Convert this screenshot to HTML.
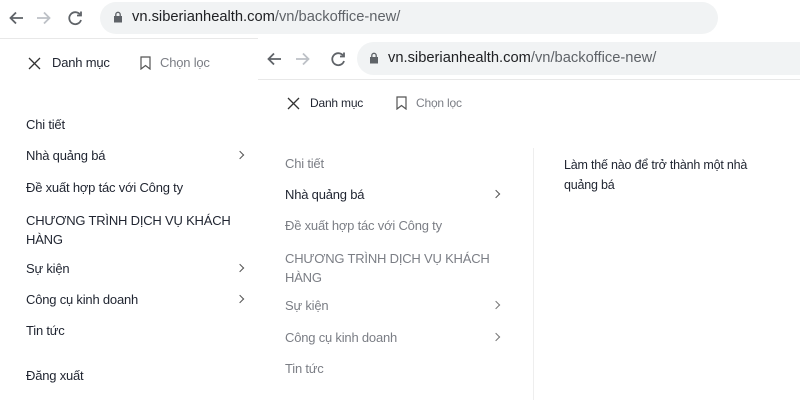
<!DOCTYPE html>
<html><head><meta charset="utf-8"><style>
*{margin:0;padding:0;box-sizing:border-box}
body{width:800px;height:400px;overflow:hidden;background:#fff;font-family:"Liberation Sans",Arial,sans-serif;position:relative;color:#1f2430}
.a{position:absolute;white-space:nowrap}
.pill{position:absolute;background:#f1f3f4;border-radius:17px}
.url{font-size:14.7px;color:#202124}
.url span{color:#5f6368}
.m{font-size:13px;color:#1f2430;letter-spacing:-0.2px}
.g{color:#7b7e85}
.chev{position:absolute;width:6px;height:6px;border-right:1.3px solid #555;border-top:1.3px solid #555;transform:rotate(45deg)}
</style></head><body>
<svg class="a" style="left:8px;top:9px" width="80" height="18" viewBox="0 0 80 18" fill="none" stroke-width="1.8">
<path d="M15 9H3M8 3.5L2.5 9 8 14.5" stroke="#5f6368"/>
<path d="M29 9h12M36 3.5L41.5 9 36 14.5" stroke="#bdc1c6"/>
<path d="M72 5.5A6 6 0 1 0 73 11" stroke="#5f6368"/><path d="M73 2.5v4h-4" stroke="#5f6368"/>
</svg>
<div class="pill" style="left:100px;top:2px;width:618px;height:32px"></div>
<svg class="a" style="left:113px;top:11px" width="10" height="12" viewBox="0 0 10 12"><rect x="1" y="5" width="8" height="6.5" fill="#5f6368"/><path d="M2.8 5V3.5a2.2 2.2 0 0 1 4.4 0V5" stroke="#5f6368" stroke-width="1.3" fill="none"/></svg>
<div class="a url" style="left:132px;top:9px">vn.siberianhealth.com<span>/vn/backoffice-new/</span></div>
<div class="a" style="left:0;top:38px;width:800px;height:1px;background:#e8e8e8"></div>
<svg class="a" style="left:28px;top:57px" width="13" height="13" viewBox="0 0 13 13"><path d="M1 1l11 11M12 1L1 12" stroke="#333" stroke-width="1.3"/></svg>
<div class="a m" style="left:52px;top:55px">Danh mục</div>
<svg class="a" style="left:140px;top:56px" width="11" height="14" viewBox="0 0 11 14"><path d="M1 1h9v12L5.5 9.5 1 13z" stroke="#555" stroke-width="1.2" fill="none"/></svg>
<div class="a m g" style="left:160px;top:55px">Chọn lọc</div>
<div class="a m" style="left:26px;top:117px">Chi tiết</div>
<div class="a m" style="left:26px;top:148px">Nhà quảng bá</div><div class="chev" style="left:237px;top:152px"></div>
<div class="a m" style="left:26px;top:180px">Đề xuất hợp tác với Công ty</div>
<div class="a m" style="left:26px;top:211px;line-height:19px">CHƯƠNG TRÌNH DỊCH VỤ KHÁCH<br>HÀNG</div>
<div class="a m" style="left:26px;top:261px">Sự kiện</div><div class="chev" style="left:237px;top:265px"></div>
<div class="a m" style="left:26px;top:292px">Công cụ kinh doanh</div><div class="chev" style="left:237px;top:296px"></div>
<div class="a m" style="left:26px;top:323px">Tin tức</div>
<div class="a m" style="left:26px;top:368px">Đăng xuất</div>
<div class="a" style="left:258px;top:36px;width:542px;height:364px;background:#fff"></div>
<svg class="a" style="left:266px;top:50px" width="80" height="18" viewBox="0 0 80 18" fill="none" stroke-width="1.8">
<path d="M15 9H3M8 3.5L2.5 9 8 14.5" stroke="#5f6368"/>
<path d="M30 9h12M37 3.5L42.5 9 37 14.5" stroke="#bdc1c6"/>
<path d="M77 5.5A6 6 0 1 0 78 11" stroke="#5f6368"/><path d="M78 2.5v4h-4" stroke="#5f6368"/>
</svg>
<div class="pill" style="left:357px;top:42px;width:460px;height:33px"></div>
<svg class="a" style="left:369px;top:52px" width="10" height="12" viewBox="0 0 10 12"><rect x="1" y="5" width="8" height="6.5" fill="#5f6368"/><path d="M2.8 5V3.5a2.2 2.2 0 0 1 4.4 0V5" stroke="#5f6368" stroke-width="1.3" fill="none"/></svg>
<div class="a url" style="left:388px;top:50px">vn.siberianhealth.com<span>/vn/backoffice-new/</span></div>
<div class="a" style="left:258px;top:79px;width:542px;height:1px;background:#e8e8e8"></div>
<svg class="a" style="left:287px;top:97px" width="13" height="13" viewBox="0 0 13 13"><path d="M1 1l11 11M12 1L1 12" stroke="#333" stroke-width="1.3"/></svg>
<div class="a m" style="left:310px;top:96px;font-size:12px">Danh mục</div>
<svg class="a" style="left:396px;top:96px" width="11" height="14" viewBox="0 0 11 14"><path d="M1 1h9v12L5.5 9.5 1 13z" stroke="#555" stroke-width="1.2" fill="none"/></svg>
<div class="a m g" style="left:416px;top:96px;font-size:12px">Chọn lọc</div>
<div class="a" style="left:533px;top:148px;width:1px;height:252px;background:#eeeeee"></div>
<div class="a m g" style="left:285px;top:156px">Chi tiết</div>
<div class="a m" style="left:285px;top:187px">Nhà quảng bá</div><div class="chev" style="left:493px;top:191px"></div>
<div class="a m g" style="left:285px;top:218px">Đề xuất hợp tác với Công ty</div>
<div class="a m g" style="left:285px;top:249px;line-height:19px">CHƯƠNG TRÌNH DỊCH VỤ KHÁCH<br>HÀNG</div>
<div class="a m g" style="left:285px;top:298px">Sự kiện</div><div class="chev" style="left:493px;top:302px;border-color:#777"></div>
<div class="a m g" style="left:285px;top:330px">Công cụ kinh doanh</div><div class="chev" style="left:493px;top:334px;border-color:#777"></div>
<div class="a m g" style="left:285px;top:361px">Tin tức</div>
<div class="a m" style="left:564px;top:155px;line-height:20px;font-size:12.5px">Làm thế nào để trở thành một nhà<br>quảng bá</div>
</body></html>
